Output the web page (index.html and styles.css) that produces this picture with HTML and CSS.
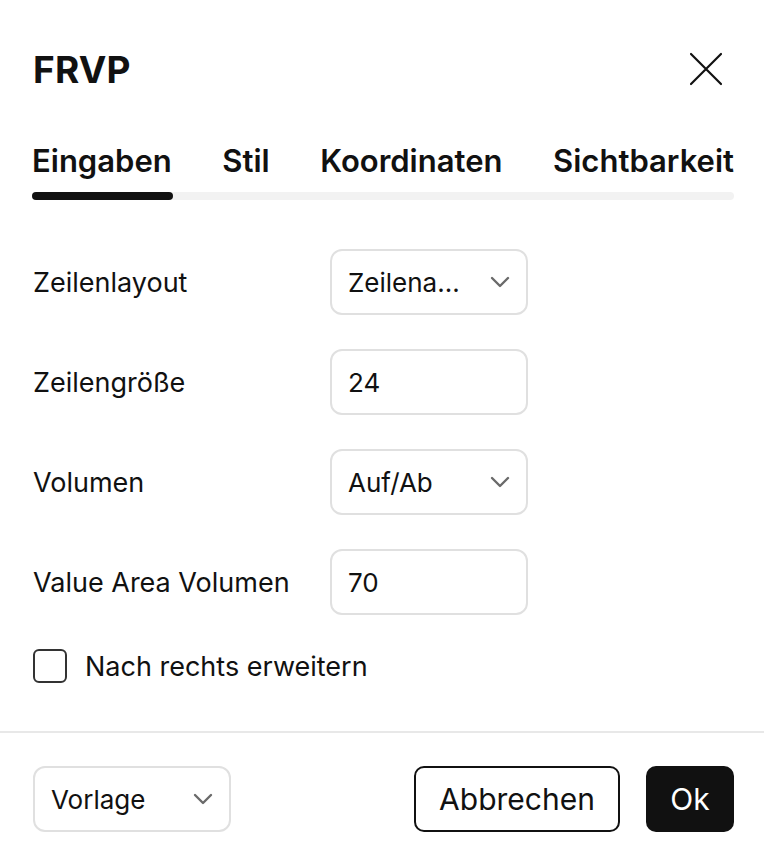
FILE: index.html
```html
<!DOCTYPE html>
<html lang="de">

<head>
    <meta charset="UTF-8">
    <meta name="viewport" content="width=device-width, initial-scale=1.0">
    <title>FRVP</title>
    <link rel="stylesheet" href="styles.css">
</head>

<body>
    <div class="dialog">
        <div class="header">
            <span class="title">FRVP</span>
            <button class="close" aria-label="Schließen">
                <svg width="34" height="34" viewBox="0 0 34 34">
                    <path d="M2 2 L32 32 M32 2 L2 32" stroke="#111" stroke-width="2.2" stroke-linecap="round" fill="none" />
                </svg>
            </button>
        </div>

        <div class="tabs">
            <div class="tab-list">
                <span class="tab active">Eingaben</span>
                <span class="tab">Stil</span>
                <span class="tab">Koordinaten</span>
                <span class="tab">Sichtbarkeit</span>
            </div>
            <div class="track">
                <div class="indicator"></div>
            </div>
        </div>

        <div class="form">
            <div class="row">
                <span class="label">Zeilenlayout</span>
                <div class="field select">
                    <span class="value">Zeilena...</span>
                    <svg class="chevron" width="20" height="12" viewBox="0 0 20 12">
                        <path d="M2 2 L10 10 L18 2" stroke="#6a6a6a" stroke-width="2.4" fill="none" stroke-linecap="round" stroke-linejoin="round" />
                    </svg>
                </div>
            </div>
            <div class="row">
                <span class="label">Zeilengröße</span>
                <div class="field">
                    <span class="value">24</span>
                </div>
            </div>
            <div class="row">
                <span class="label">Volumen</span>
                <div class="field select">
                    <span class="value">Auf/Ab</span>
                    <svg class="chevron" width="20" height="12" viewBox="0 0 20 12">
                        <path d="M2 2 L10 10 L18 2" stroke="#6a6a6a" stroke-width="2.4" fill="none" stroke-linecap="round" stroke-linejoin="round" />
                    </svg>
                </div>
            </div>
            <div class="row">
                <span class="label">Value Area Volumen</span>
                <div class="field">
                    <span class="value">70</span>
                </div>
            </div>
            <label class="check-row">
                <span class="checkbox"></span>
                <span class="label">Nach rechts erweitern</span>
            </label>
        </div>

        <div class="footer">
            <div class="field select template">
                <span class="value">Vorlage</span>
                <svg class="chevron" width="20" height="12" viewBox="0 0 20 12">
                    <path d="M2 2 L10 10 L18 2" stroke="#6a6a6a" stroke-width="2.4" fill="none" stroke-linecap="round" stroke-linejoin="round" />
                </svg>
            </div>
            <div class="actions">
                <button class="btn btn-cancel">Abbrechen</button>
                <button class="btn btn-ok">Ok</button>
            </div>
        </div>
    </div>
</body>

</html>
```

FILE: styles.css
```css
html,
body,
div,
button {
    padding: 0;
    margin: 0;
}

body {
    background-color: #fff;
    color: #111;
    font-family: Inter, "Noto Sans", sans-serif;
}

.dialog {
    width: 764px;
}

.header {
    height: 138px;
    padding: 0 32px 0 33px;
    display: flex;
    flex-direction: row;
    align-items: center;
    justify-content: space-between;
    box-sizing: border-box;
}

.header>.title {
    font-size: 37px;
    font-weight: 700;
    letter-spacing: 0.2px;
}

.header>.close {
    width: 34px;
    height: 34px;
    border: none;
    background: none;
    cursor: pointer;
    margin-right: 9px;
    display: flex;
}

.tabs {
    padding: 3px 30px 0 32px;
}

.tabs>.tab-list {
    display: flex;
    flex-direction: row;
    justify-content: space-between;
    padding-bottom: 11px;
}

.tabs .tab {
    font-size: 31px;
    font-weight: 600;
    line-height: 40px;
    color: #111;
}

.tabs>.track {
    height: 8px;
    border-radius: 4px;
    background-color: #f2f2f2;
    display: flex;
}

.tabs>.track>.indicator {
    width: 141px;
    border-radius: 4px;
    background-color: #111;
}

.form {
    padding: 49px 32px 48px 33px;
    display: flex;
    flex-direction: column;
    gap: 34px;
}

.row {
    display: flex;
    flex-direction: row;
    align-items: center;
}

.row>.label {
    width: 297px;
}

.label {
    font-size: 27px;
    color: #111;
}

.field {
    width: 198px;
    height: 66px;
    box-sizing: border-box;
    border: 2px solid #e0e0e0;
    border-radius: 12px;
    padding: 0 16px 0 16px;
    display: flex;
    flex-direction: row;
    align-items: center;
    justify-content: space-between;
    font-size: 26px;
}

.field>.chevron {
    flex-shrink: 0;
}

.check-row {
    display: flex;
    flex-direction: row;
    align-items: center;
    gap: 18px;
    height: 34px;
}

.check-row>.checkbox {
    width: 34px;
    height: 34px;
    box-sizing: border-box;
    border: 2px solid #333;
    border-radius: 6px;
}

.footer {
    border-top: 2px solid #e8e8e8;
    padding: 33px 30px 19px 33px;
    display: flex;
    flex-direction: row;
    justify-content: space-between;
    align-items: center;
}

.footer>.actions {
    display: flex;
    flex-direction: row;
    gap: 26px;
}

.btn {
    height: 66px;
    border-radius: 10px;
    font-family: Inter, "Noto Sans", sans-serif;
    font-size: 30px;
    cursor: pointer;
    box-sizing: border-box;
}

.btn-cancel {
    width: 206px;
    border: 2px solid #111;
    background-color: #fff;
    color: #111;
}

.btn-ok {
    width: 88px;
    border: none;
    background-color: #111;
    color: #fff;
}
```
